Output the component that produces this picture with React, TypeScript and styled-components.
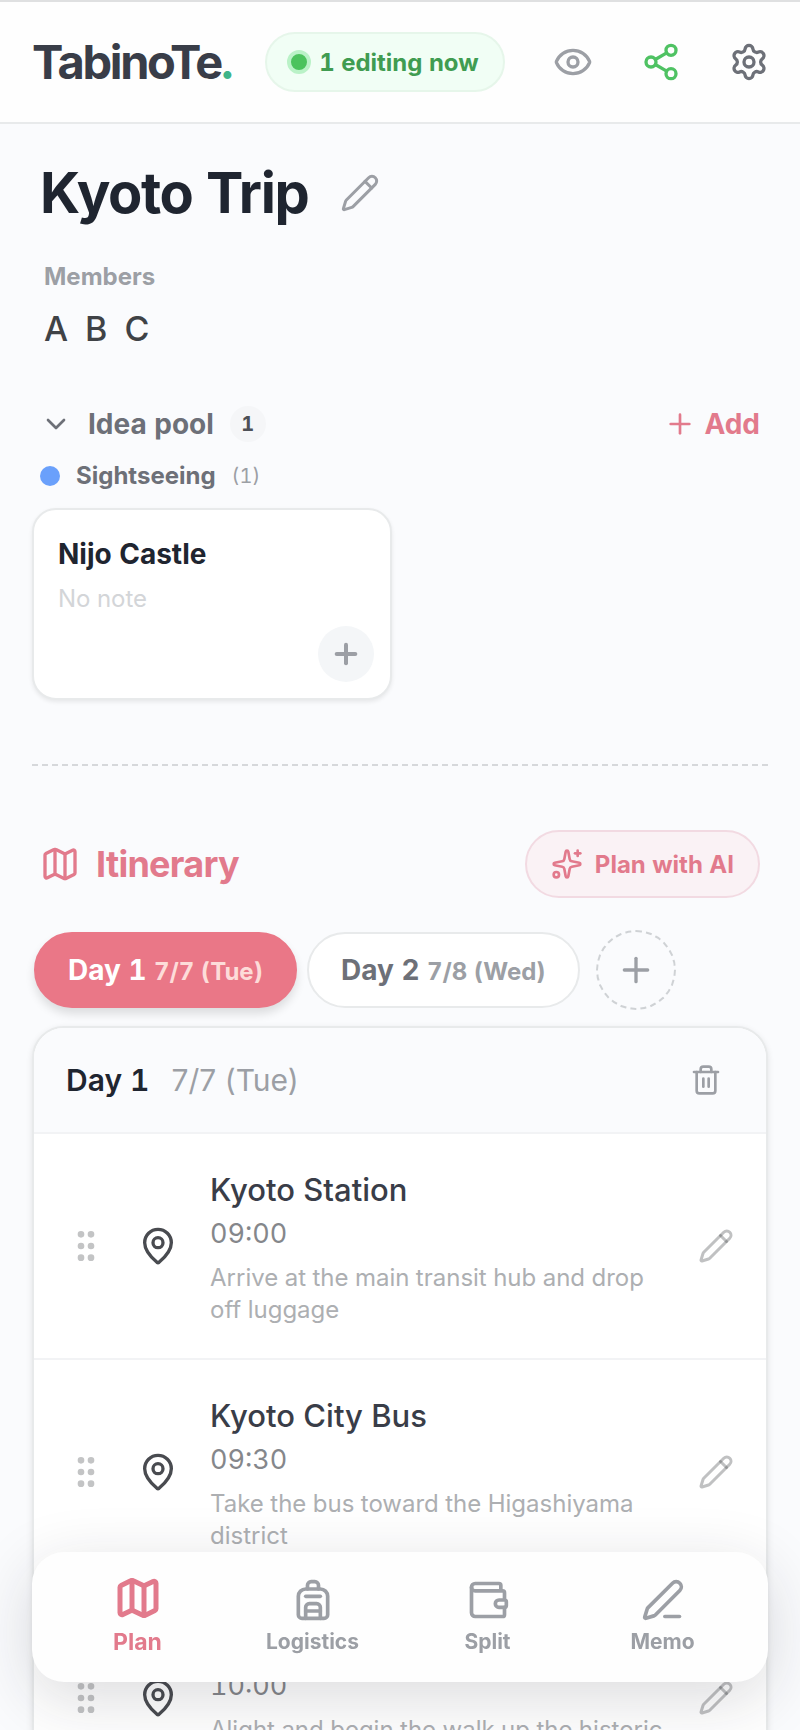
import React from "react";
import styled, { createGlobalStyle } from "styled-components";
import {
  Backpack,
  ChevronDown,
  Eye,
  GripVertical,
  Map as MapIcon,
  MapPin,
  PenLine,
  Pencil,
  Plus,
  Settings,
  Share2,
  Sparkles,
  Trash2,
  Wallet,
} from "lucide-react";

const color = {
  page: "#fafbfd",
  surface: "#ffffff",
  line: "#e8eaeb",
  ink: "#1f2530",
  text: "#393d48",
  muted: "#6d7078",
  soft: "#9c9fa5",
  faint: "#adafb2",
  rose: "#e27a8c",
  roseFill: "#ea7787",
};

const GlobalStyle = createGlobalStyle`
  *, *::before, *::after { box-sizing: border-box; }
  body {
    margin: 0;
    background: ${color.page};
    color: ${color.ink};
    font-family: Inter, "Liberation Sans", sans-serif;
    font-variant-numeric: tabular-nums;
  }
  h1, h2, h3, p, ul { margin: 0; padding: 0; }
  ul { list-style: none; }
  button { font: inherit; font-variant-numeric: inherit; cursor: pointer; }
  a { text-decoration: none; }
  svg { display: block; flex: none; }
`;

const Shell = styled.div`
  display: flex;
  flex-direction: column;
  height: 100vh;
  border-top: 2px solid #dfe0e1;
`;

const Header = styled.header`
  flex: none;
  display: flex;
  align-items: center;
  gap: 34px;
  padding: 30px 31px 30px 32px;
  background: #fefefe;
  border-bottom: 2px solid ${color.line};
`;

const Logo = styled.a`
  color: ${color.text};
  font-size: 47px;
  font-weight: 700;
  line-height: 60px;
  letter-spacing: -0.05em;
  span {
    color: #3fb489;
  }
`;

const Presence = styled.div`
  display: flex;
  align-items: center;
  gap: 8px;
  height: 60px;
  padding: 0 24px 0 20px;
  border: 2px solid #e6f6ea;
  border-radius: 30px;
  background: #f1fef5;
  color: #409c51;
  font-size: 24px;
  font-weight: 700;
  white-space: nowrap;
`;

const LiveDot = styled.span`
  width: 24px;
  height: 24px;
  border: 4px solid #baf2c7;
  border-radius: 50%;
  background: #4bc35d;
`;

const HeaderActions = styled.div`
  display: flex;
  gap: 48px;
  margin-left: auto;
`;

const IconButton = styled.button<{ $tone: string; $pad?: number }>`
  flex: none;
  padding: ${(p) => p.$pad ?? 0}px;
  border: 0;
  background: none;
  color: ${(p) => p.$tone};
`;

const Main = styled.main`
  flex: 1;
  min-height: 0;
  overflow-y: auto;
  scrollbar-width: none;
  padding: 37px 32px 200px;
`;

const TitleRow = styled.div`
  display: flex;
  align-items: center;
  gap: 32px;
  padding-left: 8px;
`;

const Title = styled.h1`
  font-size: 56px;
  font-weight: 700;
  line-height: 64px;
  letter-spacing: -0.025em;
`;

const Members = styled.section`
  padding: 36px 12px 0;
`;

const MembersLabel = styled.h2`
  color: ${color.soft};
  font-size: 24px;
  font-weight: 700;
  line-height: 32px;
`;

const MemberList = styled.ul`
  display: flex;
  gap: 17px;
  margin-top: 12px;
  color: #3f4246;
  font-size: 34px;
  font-weight: 500;
  line-height: 48px;
`;

const SectionBar = styled.div`
  display: flex;
  align-items: center;
  justify-content: space-between;
`;

const PoolBar = styled(SectionBar)`
  margin-top: 53px;
  padding: 0 8px;
`;

const PoolToggle = styled.button`
  display: flex;
  align-items: center;
  gap: 16px;
  padding: 0;
  border: 0;
  background: none;
  color: ${color.muted};
  font-size: 28px;
  font-weight: 700;
  line-height: 36px;
`;

const CountBadge = styled.span`
  min-width: 36px;
  border-radius: 18px;
  background: #f5f6f8;
  color: #4d5057;
  font-size: 20px;
  text-align: center;
`;

const AddButton = styled.button`
  display: flex;
  align-items: center;
  gap: 8px;
  padding: 0;
  border: 0;
  background: none;
  color: ${color.rose};
  font-size: 28px;
  font-weight: 700;
  line-height: 36px;
`;

const CategoryRow = styled.h3`
  display: flex;
  align-items: center;
  gap: 16px;
  margin-top: 18px;
  padding-left: 8px;
  color: ${color.muted};
  font-size: 24px;
  font-weight: 700;
  line-height: 32px;
  &::before {
    content: "";
    width: 20px;
    height: 20px;
    border-radius: 50%;
    background: #6aa0fb;
  }
`;

const CategoryCount = styled.span`
  color: ${color.soft};
  font-size: 20px;
  font-weight: 400;
`;

const IdeaGrid = styled.div`
  display: grid;
  grid-template-columns: 1fr 1fr;
  gap: 16px;
  margin-top: 16px;
`;

const IdeaCard = styled.article`
  display: flex;
  flex-direction: column;
  padding: 26px 16px 16px 24px;
  border: 2px solid ${color.line};
  border-radius: 24px;
  background: ${color.surface};
  box-shadow: 0 2px 4px rgba(0, 0, 0, 0.08);
`;

const IdeaName = styled.h4`
  margin: 0;
  font-size: 28px;
  font-weight: 700;
  line-height: 36px;
`;

const IdeaNote = styled.p`
  margin-top: 11px;
  color: #d3d5d8;
  font-size: 24px;
  line-height: 32px;
`;

const RoundAdd = styled.button`
  display: grid;
  place-items: center;
  align-self: flex-end;
  width: 56px;
  height: 56px;
  margin-top: 11px;
  padding: 0;
  border: 0;
  border-radius: 50%;
  background: #f4f6f8;
  color: ${color.soft};
`;

const Divider = styled.hr`
  margin: 64px 0;
  border: 0;
  border-top: 2px dashed #d6d8db;
`;

const ItineraryBar = styled(SectionBar)`
  padding: 0 8px;
`;

const SectionTitle = styled.h2`
  display: flex;
  align-items: center;
  gap: 16px;
  color: ${color.rose};
  font-size: 36px;
  font-weight: 700;
  line-height: 48px;
  letter-spacing: -0.02em;
`;

const PlanButton = styled.button`
  display: flex;
  align-items: center;
  gap: 12px;
  height: 68px;
  padding: 0 24px;
  border: 2px solid #f2dae2;
  border-radius: 34px;
  background: #faf2f5;
  color: ${color.rose};
  font-size: 24px;
  font-weight: 700;
`;

const DayTabs = styled.div`
  display: flex;
  align-items: center;
  gap: 10px;
  margin-top: 32px;
  padding: 0 2px;
`;

const DayTab = styled.button<{ $active?: boolean }>`
  height: 76px;
  padding: 0 32px;
  border: 2px solid ${(p) => (p.$active ? color.roseFill : color.line)};
  border-radius: 38px;
  background: ${(p) => (p.$active ? color.roseFill : color.surface)};
  box-shadow: ${(p) => (p.$active ? "0 6px 10px rgba(0, 0, 0, 0.12)" : "none")};
  color: ${(p) => (p.$active ? "#ffffff" : color.muted)};
  font-size: 28px;
  font-weight: 700;
  white-space: nowrap;
  span {
    color: ${(p) => (p.$active ? "#fddcd9" : color.soft)};
    font-size: 24px;
  }
`;

const AddDay = styled.button`
  display: grid;
  place-items: center;
  width: 80px;
  height: 80px;
  margin-left: 6px;
  padding: 0;
  border: 2px dashed #cfd2d5;
  border-radius: 50%;
  background: none;
  color: ${color.soft};
`;

const DayCard = styled.section`
  margin-top: 16px;
  overflow: hidden;
  border: 2px solid ${color.line};
  border-radius: 32px;
  background: ${color.surface};
  box-shadow: 0 2px 6px rgba(0, 0, 0, 0.1);
`;

const DayHeader = styled.header`
  display: flex;
  align-items: center;
  justify-content: space-between;
  padding: 24px 32px;
  background: ${color.page};
`;

const DayName = styled.h3`
  display: flex;
  gap: 22px;
  font-size: 30px;
  font-weight: 600;
  span {
    color: ${color.soft};
    font-weight: 400;
    font-variant-numeric: normal;
  }
`;

const Stop = styled.li`
  display: flex;
  align-items: center;
  gap: 32px;
  padding: 32px;
  border-top: 2px solid #f2f3f5;
`;

const StopBody = styled.div`
  flex: 1;
  min-width: 0;
`;

const StopName = styled.h4`
  min-height: 48px;
  margin: 0;
  color: ${color.text};
  font-size: 31px;
  font-weight: 500;
  line-height: 48px;
`;

const StopTime = styled.p`
  color: #85878b;
  font-size: 27px;
  line-height: 40px;
`;

const StopNote = styled.p`
  min-height: 64px;
  margin-top: 8px;
  color: ${color.faint};
  font-size: 24px;
  line-height: 32px;
`;

const BottomNav = styled.nav`
  position: fixed;
  right: 32px;
  bottom: 48px;
  left: 32px;
  display: grid;
  grid-template-columns: repeat(4, 1fr);
  padding: 22px 18px 26px;
  border-radius: 32px;
  background: #fefefe;
  box-shadow: 0 16px 64px rgba(30, 34, 42, 0.16);
`;

const NavItem = styled.a<{ $active?: boolean }>`
  display: flex;
  flex-direction: column;
  align-items: center;
  justify-content: flex-end;
  gap: 6px;
  color: ${(p) => (p.$active ? color.rose : color.soft)};
  font-size: ${(p) => (p.$active ? 23 : 21)}px;
  font-weight: 700;
  line-height: 28px;
`;

const stops = [
  {
    name: "Kyoto Station",
    time: "09:00",
    note: "Arrive at the main transit hub and drop off luggage",
  },
  {
    name: "Kyoto City Bus",
    time: "09:30",
    note: "Take the bus toward the Higashiyama district",
  },
  {
    name: "",
    time: "10:00",
    note: "Alight and begin the walk up the historic",
  },
];

const tabs = [
  { label: "Plan", icon: MapIcon, active: true },
  { label: "Logistics", icon: Backpack },
  { label: "Split", icon: Wallet },
  { label: "Memo", icon: PenLine },
];

export default function App() {
  return (
    <Shell>
      <GlobalStyle />
      <Header>
        <Logo href="#">
          TabinoTe<span>.</span>
        </Logo>
        <Presence role="status">
          <LiveDot />1 editing now
        </Presence>
        <HeaderActions>
          <IconButton $tone={color.soft} aria-label="Preview">
            <Eye size={40} />
          </IconButton>
          <IconButton $tone="#4fc263" aria-label="Share">
            <Share2 size={40} />
          </IconButton>
          <IconButton $tone={color.muted} aria-label="Settings">
            <Settings size={40} />
          </IconButton>
        </HeaderActions>
      </Header>

      <Main>
        <TitleRow>
          <Title>Kyoto Trip</Title>
          <IconButton $tone={color.soft} aria-label="Rename trip">
            <Pencil size={40} strokeWidth={1.8} />
          </IconButton>
        </TitleRow>

        <Members>
          <MembersLabel>Members</MembersLabel>
          <MemberList>
            <li>A</li>
            <li>B</li>
            <li>C</li>
          </MemberList>
        </Members>

        <PoolBar>
          <PoolToggle aria-expanded="true">
            <ChevronDown size={32} />
            Idea pool
            <CountBadge>1</CountBadge>
          </PoolToggle>
          <AddButton>
            <Plus size={32} />
            Add
          </AddButton>
        </PoolBar>
        <CategoryRow>
          Sightseeing <CategoryCount>(1)</CategoryCount>
        </CategoryRow>
        <IdeaGrid>
          <IdeaCard>
            <IdeaName>Nijo Castle</IdeaName>
            <IdeaNote>No note</IdeaNote>
            <RoundAdd aria-label="Add Nijo Castle to itinerary">
              <Plus size={32} strokeWidth={3} />
            </RoundAdd>
          </IdeaCard>
        </IdeaGrid>

        <Divider />

        <ItineraryBar>
          <SectionTitle>
            <MapIcon size={40} />
            Itinerary
          </SectionTitle>
          <PlanButton>
            <Sparkles size={32} />
            Plan with AI
          </PlanButton>
        </ItineraryBar>

        <DayTabs role="tablist">
          <DayTab role="tab" aria-selected="true" $active>
            Day 1 <span>7/7 (Tue)</span>
          </DayTab>
          <DayTab role="tab" aria-selected="false">
            Day 2 <span>7/8 (Wed)</span>
          </DayTab>
          <AddDay aria-label="Add day">
            <Plus size={40} />
          </AddDay>
        </DayTabs>

        <DayCard>
          <DayHeader>
            <DayName>
              Day 1 <span>7/7 (Tue)</span>
            </DayName>
            <IconButton $tone={color.soft} $pad={12} aria-label="Delete day">
              <Trash2 size={32} />
            </IconButton>
          </DayHeader>
          <ul>
            {stops.map((stop) => (
              <Stop key={stop.time}>
                <GripVertical size={40} color="#c3c4c5" />
                <MapPin size={40} color="#494b50" />
                <StopBody>
                  <StopName>{stop.name}</StopName>
                  <StopTime>{stop.time}</StopTime>
                  <StopNote>{stop.note}</StopNote>
                </StopBody>
                <IconButton
                  $tone="rgba(60, 62, 66, 0.32)"
                  aria-label={`Edit ${stop.name || stop.time}`}
                >
                  <Pencil size={36} />
                </IconButton>
              </Stop>
            ))}
          </ul>
        </DayCard>
      </Main>

      <BottomNav aria-label="Sections">
        {tabs.map(({ label, icon: Icon, active }) => (
          <NavItem
            key={label}
            href={`#${label.toLowerCase()}`}
            $active={active}
            aria-current={active ? "page" : undefined}
          >
            <Icon size={active ? 48 : 44} strokeWidth={active ? 2.5 : 2} />
            {label}
          </NavItem>
        ))}
      </BottomNav>
    </Shell>
  );
}
